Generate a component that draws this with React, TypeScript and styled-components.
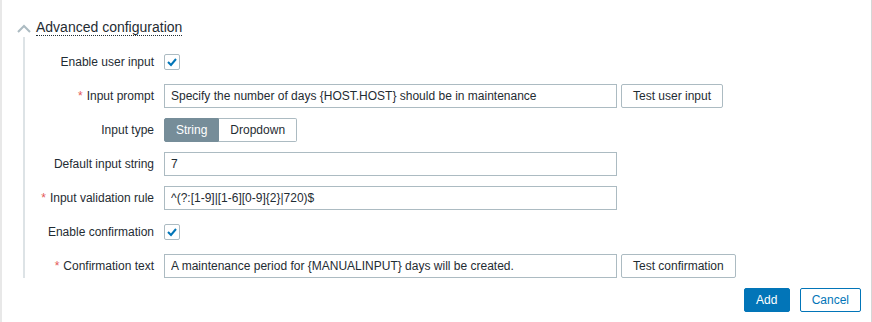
import React from 'react';
import styled, {createGlobalStyle} from "styled-components";

const GlobalStyle = createGlobalStyle`
  html, body {
    margin: 0;
    padding: 0;
    background: #ffffff;
  }
  body {
    font-family: "Liberation Sans", Arial, sans-serif;
    font-size: 12px;
    color: #1f2c33;
  }
`

type FieldPropsType = {
    label: string
    required?: boolean
    children: React.ReactNode
}

const Field = (props: FieldPropsType) => {
    return (
        <>
            <Label>
                {props.required && <Asterisk>*</Asterisk>}
                {props.label}
            </Label>
            <Control>{props.children}</Control>
        </>
    );
};

const Checkbox = () => (
    <CheckBox>
        <svg width="12" height="10" viewBox="0 0 12 10">
            <polyline points="2,5 5,8 10,2" fill="none" stroke="#0275b8" strokeWidth="2"/>
        </svg>
    </CheckBox>
);

export default function App() {
    return (
        <>
            <GlobalStyle/>
            <Panel>
                <SectionHeader>
                    <Chevron width="14" height="9" viewBox="0 0 14 9">
                        <polyline points="1,8 7,2 13,8" fill="none" stroke="#acbbc2" strokeWidth="2"/>
                    </Chevron>
                    <SectionTitle>Advanced configuration</SectionTitle>
                </SectionHeader>
                <SectionBody>
                    <Field label="Enable user input">
                        <Checkbox/>
                    </Field>
                    <Field label="Input prompt" required>
                        <TextInput value="Specify the number of days {HOST.HOST} should be in maintenance" readOnly/>
                        <Button>Test user input</Button>
                    </Field>
                    <Field label="Input type">
                        <Segmented>
                            <Segment active>String</Segment>
                            <Segment>Dropdown</Segment>
                        </Segmented>
                    </Field>
                    <Field label="Default input string">
                        <TextInput value="7" readOnly/>
                    </Field>
                    <Field label="Input validation rule" required>
                        <TextInput value="^(?:[1-9]|[1-6][0-9]{2}|720)$" readOnly/>
                    </Field>
                    <Field label="Enable confirmation">
                        <Checkbox/>
                    </Field>
                    <Field label="Confirmation text" required>
                        <TextInput value="A maintenance period for {MANUALINPUT} days will be created." readOnly/>
                        <Button>Test confirmation</Button>
                    </Field>
                </SectionBody>
                <Footer>
                    <Button primary>Add</Button>
                    <Button outline>Cancel</Button>
                </Footer>
            </Panel>
        </>
    );
}

const Panel = styled.div`
  box-sizing: border-box;
  width: 872px;
  height: 322px;
  border-left: 2px solid #e8e8e8;
  border-right: 1px solid #d6d6d6;
  display: flex;
  flex-direction: column;
`
const SectionHeader = styled.div`
  display: flex;
  align-items: center;
  gap: 5px;
  margin-top: 19px;
  height: 17px;
  padding-left: 15px;
`
const Chevron = styled.svg`
  margin-top: 2px;
`
const SectionTitle = styled.span`
  font-size: 14px;
  line-height: 16px;
  color: #1f2c33;
  border-bottom: 1px dotted #1f2c33;
`
const SectionBody = styled.div`
  margin: 1px 0 0 21px;
  padding-top: 13px;
  border-left: 2px solid #dde3e6;
  display: grid;
  grid-template-columns: 129px 1fr;
  grid-auto-rows: 24px;
  column-gap: 10px;
  row-gap: 10px;
`
const Label = styled.div`
  display: flex;
  align-items: center;
  justify-content: flex-end;
  white-space: nowrap;
`
const Asterisk = styled.span`
  color: #e45959;
  margin-right: 4px;
`
const Control = styled.div`
  display: flex;
  align-items: center;
  gap: 4px;
`
const CheckBox = styled.span`
  box-sizing: border-box;
  width: 16px;
  height: 16px;
  border: 1px solid #acbbc2;
  border-radius: 2px;
  display: flex;
  align-items: center;
  justify-content: center;
`
const TextInput = styled.input`
  box-sizing: border-box;
  width: 453px;
  height: 24px;
  border: 1px solid #acbbc2;
  border-radius: 0;
  padding: 0 6px;
  font-family: "Liberation Sans", Arial, sans-serif;
  font-size: 12px;
  color: #1f2c33;
  outline: none;
`
const Button = styled.button<{primary?: boolean, outline?: boolean}>`
  box-sizing: border-box;
  height: 24px;
  padding: 0 11px;
  border: 1px solid ${p => p.primary || p.outline ? '#0275b8' : '#acbbc2'};
  border-radius: 2px;
  background: ${p => p.primary ? '#0275b8' : '#ffffff'};
  color: ${p => p.primary ? '#ffffff' : p.outline ? '#0275b8' : '#1f2c33'};
  font-family: "Liberation Sans", Arial, sans-serif;
  font-size: 12px;
  white-space: nowrap;
  cursor: pointer;
`
const Segmented = styled.div`
  display: flex;
  height: 24px;
`
const Segment = styled.div<{active?: boolean}>`
  box-sizing: border-box;
  display: flex;
  align-items: center;
  padding: 0 11px;
  border: 1px solid ${p => p.active ? '#768d99' : '#acbbc2'};
  background: ${p => p.active ? '#768d99' : '#ffffff'};
  color: ${p => p.active ? '#ffffff' : '#1f2c33'};
  &:first-child {
    border-radius: 2px 0 0 2px;
  }
  &:last-child {
    border-radius: 0 2px 2px 0;
    border-left: none;
  }
`
const Footer = styled.div`
  display: flex;
  justify-content: flex-end;
  gap: 10px;
  margin-top: 10px;
  padding-right: 10px;
  & > button:first-child {
    min-width: 46px;
  }
`
